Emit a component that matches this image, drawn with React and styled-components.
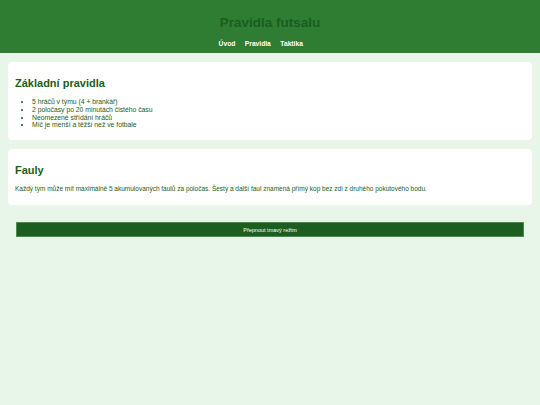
import React, { useState } from "react";
import styled, { createGlobalStyle } from "styled-components";

const GlobalStyle = createGlobalStyle`
   html, body {
      margin: 0;
      padding: 0;
   }
   body {
      background-color: #e8f5e9;
      font-family: "Liberation Sans", Arial, sans-serif;
      color: #1b5e20;
   }
`;

const Header = styled.header`
   background-color: #2e7d32;
   height: 53px;
   display: flex;
   flex-direction: column;
   align-items: center;
   padding-top: 15px;
   box-sizing: border-box;
`;

const Title = styled.h1`
   margin: 0;
   font-size: 13.5px;
   font-weight: bold;
   color: #1b5e20;
`;

const Nav = styled.nav`
   display: flex;
   margin-top: 10px;
   padding-right: 9px;
`;

const NavLink = styled.a`
   color: #ffffff;
   font-size: 6.7px;
   font-weight: bold;
   text-decoration: none;
   margin-right: 9.5px;
`;

const Main = styled.main`
   padding: 9px 8px;
   display: flex;
   flex-direction: column;
   gap: 9px;
`;

const Card = styled.section`
   background-color: #ffffff;
   border-radius: 4px;
   padding: 15px 7px ${(p) => p.$bottom || 11}px;
`;

const CardTitle = styled.h2`
   margin: 0 0 9px;
   font-size: 11px;
   font-weight: bold;
   color: #1b5e20;
`;

const List = styled.ul`
   margin: 0;
   padding-left: 17px;
   font-size: 6.8px;
   line-height: 7.8px;
`;

const Text = styled.p`
   margin: 0;
   font-size: 6.5px;
`;

const ToggleButton = styled.button`
   display: block;
   margin: 8px 8px 0;
   height: 15px;
   background-color: #1b5e20;
   color: #ffffff;
   border: 1px solid #4c8a4f;
   font-family: "Liberation Sans", Arial, sans-serif;
   font-size: 5.5px;
   cursor: pointer;
`;

export default function App() {
   const [dark, setDark] = useState(false);

   return (
      <>
         <GlobalStyle />
         <Header>
            <Title>Pravidla futsalu</Title>
            <Nav>
               <NavLink href="#uvod">Úvod</NavLink>
               <NavLink href="#pravidla">Pravidla</NavLink>
               <NavLink href="#taktika">Taktika</NavLink>
            </Nav>
         </Header>
         <Main>
            <Card>
               <CardTitle>Základní pravidla</CardTitle>
               <List>
                  <li>5 hráčů v týmu (4 + brankář)</li>
                  <li>2 poločasy po 20 minutách čistého času</li>
                  <li>Neomezené střídání hráčů</li>
                  <li>Míč je menší a těžší než ve fotbale</li>
               </List>
            </Card>
            <Card $bottom={13}>
               <CardTitle>Fauly</CardTitle>
               <Text>
                  Každý tým může mít maximálně 5 akumulovaných faulů za
                  poločas. Šestý a další faul znamená přímý kop bez zdi z
                  druhého pokutového bodu.
               </Text>
            </Card>
            <ToggleButton onClick={() => setDark(!dark)}>
               Přepnout tmavý režim
            </ToggleButton>
         </Main>
      </>
   );
}
